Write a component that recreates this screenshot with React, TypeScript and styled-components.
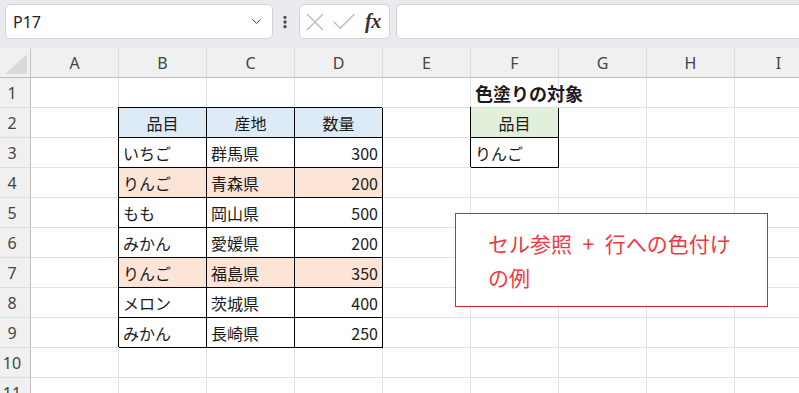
import React from "react";
import styled, { createGlobalStyle, css } from "styled-components";
import { ChevronDown, EllipsisVertical, X, Check } from "lucide-react";

const GlobalStyle = createGlobalStyle`
  html, body {
    margin: 0;
    padding: 0;
    background: #ffffff;
    overflow: hidden;
  }
  body {
    font-family: "Noto Sans CJK JP", "Noto Sans", sans-serif;
    color: #222;
  }
`;

type Fill = "blue" | "peach" | "green";
type Align = "left" | "center" | "right";

type CellSpec = {
  text?: string;
  align?: Align;
  fill?: Fill;
  boxed?: boolean;
  bold?: boolean;
};

const COLUMNS = ["A", "B", "C", "D", "E", "F", "G", "H", "I"];
const ROW_COUNT = 11;

const fills: Record<Fill, string> = {
  blue: "#ddebf7",
  peach: "#fce4d6",
  green: "#e2efda",
};

// 元データ B2:D9
const tableRows: [string, string, string][] = [
  ["いちご", "群馬県", "300"],
  ["りんご", "青森県", "200"],
  ["もも", "岡山県", "500"],
  ["みかん", "愛媛県", "200"],
  ["りんご", "福島県", "350"],
  ["メロン", "茨城県", "400"],
  ["みかん", "長崎県", "250"],
];
const target = "りんご";

const buildSheet = () => {
  const sheet: Record<string, CellSpec> = {};
  ["品目", "産地", "数量"].forEach((t, i) => {
    sheet[`${"BCD"[i]}2`] = { text: t, align: "center", fill: "blue", boxed: true };
  });
  tableRows.forEach((row, r) => {
    const hit = row[0] === target;
    row.forEach((t, c) => {
      sheet[`${"BCD"[c]}${r + 3}`] = {
        text: t,
        align: c === 2 ? "right" : "left",
        fill: hit ? "peach" : undefined,
        boxed: true,
      };
    });
  });
  sheet["F1"] = { text: "色塗りの対象", bold: true };
  sheet["F2"] = { text: "品目", align: "center", fill: "green", boxed: true };
  sheet["F3"] = { text: target, boxed: true };
  return sheet;
};

const sheet = buildSheet();

const App = () => {
  return (
    <>
      <GlobalStyle />
      <Page>
        <Toolbar>
          <NameBox>
            <span>P17</span>
            <ChevronDown size={15} strokeWidth={1.6} color="#333" />
          </NameBox>
          <Grip>
            <EllipsisVertical size={16} strokeWidth={3} color="#444" />
          </Grip>
          <FormulaButtons>
            <X size={30} strokeWidth={1} color="#b8b8b8" />
            <Check size={30} strokeWidth={1} color="#b8b8b8" />
            <Fx>fx</Fx>
          </FormulaButtons>
          <FormulaInput />
        </Toolbar>

        <SheetArea>
          <Grid>
            <Corner>
              <Triangle />
            </Corner>
            {COLUMNS.map((c) => (
              <ColHeader key={c}>{c}</ColHeader>
            ))}
            {Array.from({ length: ROW_COUNT }, (_, i) => i + 1).map((r) => (
              <React.Fragment key={r}>
                <RowHeader>{r}</RowHeader>
                {COLUMNS.map((c) => {
                  const spec = sheet[`${c}${r}`] ?? {};
                  return (
                    <Cell
                      key={c}
                      $align={spec.align ?? "left"}
                      $fill={spec.fill}
                      $boxed={!!spec.boxed}
                      $bold={!!spec.bold}
                    >
                      {spec.text}
                    </Cell>
                  );
                })}
              </React.Fragment>
            ))}
          </Grid>

          <Callout>
            セル参照{"\u2002"}+{"\u2002"}行への色付け
            <br />
            の例
          </Callout>
        </SheetArea>
      </Page>
    </>
  );
};

const Page = styled.div`
  width: 799px;
  height: 393px;
  overflow: hidden;
  display: flex;
  flex-direction: column;
`;

const Toolbar = styled.div`
  height: 48px;
  flex-shrink: 0;
  box-sizing: border-box;
  padding: 4px 0 9px 5px;
  background: #e9ebee;
  display: flex;
  align-items: stretch;
`;

const boxLook = css`
  box-sizing: border-box;
  background: #ffffff;
  border: 1px solid #d2d4d7;
  border-radius: 5px;
`;

const NameBox = styled.div`
  ${boxLook};
  width: 268px;
  display: flex;
  align-items: center;
  justify-content: space-between;
  padding: 0 8px 0 7px;
  font-family: "Noto Sans", "Liberation Sans", sans-serif;
  font-size: 16px;
  color: #222;
`;

const Grip = styled.div`
  width: 24px;
  margin-right: 2px;
  display: flex;
  align-items: center;
  justify-content: center;
`;

const FormulaButtons = styled.div`
  ${boxLook};
  width: 91px;
  display: flex;
  align-items: center;
  padding: 0;

  svg {
    flex-shrink: 0;
  }
  svg + svg {
    margin-left: -1px;
  }
`;

const Fx = styled.span`
  font-family: "Liberation Serif", "DejaVu Serif", serif;
  font-style: italic;
  font-weight: bold;
  font-size: 20px;
  color: #333;
  margin-left: 6px;
  letter-spacing: -0.5px;
`;

const FormulaInput = styled.div`
  ${boxLook};
  flex: 1;
  margin-left: 6px;
  border-right: none;
  border-radius: 5px 0 0 5px;
`;

const SheetArea = styled.div`
  position: relative;
  flex: 1;
  overflow: hidden;
`;

const Grid = styled.div`
  display: grid;
  grid-template-columns: 31px repeat(9, 88px);
  grid-auto-rows: 30px;
`;

const headerBase = css`
  box-sizing: border-box;
  background: #f0f0f0;
  color: #444;
  font-family: "Noto Sans", "Liberation Sans", sans-serif;
  font-size: 16px;
  display: flex;
  align-items: center;
`;

const Corner = styled.div`
  ${headerBase};
  border-right: 1px solid #c6c6c6;
  border-bottom: 1px solid #bcbcbc;
  position: relative;
`;

const Triangle = styled.div`
  position: absolute;
  left: 5px;
  bottom: 3px;
  width: 0;
  height: 0;
  border-left: 22px solid transparent;
  border-bottom: 20px solid #dadada;
`;

const ColHeader = styled.div`
  ${headerBase};
  justify-content: center;
  border-right: 1px solid #dcdcdc;
  border-bottom: 1px solid #bcbcbc;
`;

const RowHeader = styled.div`
  ${headerBase};
  justify-content: center;
  padding-right: 6px;
  border-right: 1px solid #bcbcbc;
  border-bottom: 1px solid #dcdcdc;
`;

const Cell = styled.div<{
  $align: Align;
  $fill?: Fill;
  $boxed: boolean;
  $bold: boolean;
}>`
  box-sizing: border-box;
  display: flex;
  align-items: center;
  justify-content: ${({ $align }) =>
    $align === "center" ? "center" : $align === "right" ? "flex-end" : "flex-start"};
  padding: 0 4px 0 4px;
  white-space: nowrap;
  font-size: ${({ $bold }) => ($bold ? "18px" : "16px")};
  font-weight: ${({ $bold }) => ($bold ? 700 : 400)};
  color: #1a1a1a;
  background: ${({ $fill }) => ($fill ? fills[$fill] : "#ffffff")};
  border-right: 1px solid ${({ $boxed }) => ($boxed ? "#000" : "#e1e1e1")};
  border-bottom: 1px solid ${({ $boxed }) => ($boxed ? "#000" : "#e1e1e1")};
  box-shadow: ${({ $boxed }) => ($boxed ? "-1px -1px 0 0 #000" : "none")};
  overflow: visible;
  position: relative;
  z-index: ${({ $bold, $boxed }) => ($bold ? 2 : $boxed ? 1 : 0)};
`;

const Callout = styled.div`
  position: absolute;
  left: 455px;
  top: 165px;
  width: 313px;
  height: 94px;
  box-sizing: border-box;
  border: 1px solid #e3222c;
  background: #ffffff;
  padding: 12px 0 0 32px;
  color: #ec3a44;
  font-size: 21px;
  line-height: 34px;
  z-index: 3;
`;

export default App;
